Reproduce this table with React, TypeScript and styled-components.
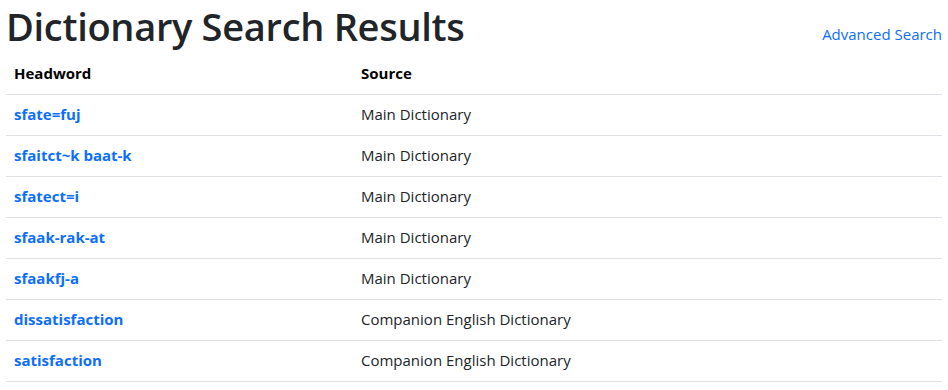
import React from "react";
import styled, { createGlobalStyle } from "styled-components";

const GlobalStyle = createGlobalStyle`
  body {
    margin: 0;
    background: #fff;
    color: #212529;
    font-family: "Open Sans", "Noto Sans", sans-serif;
    font-size: 16px;
    line-height: 1.5;
  }
`;

const Page = styled.div`
  padding: 0 6px;
`;

const Header = styled.div`
  display: flex;
  justify-content: space-between;
  align-items: flex-start;
  height: 53px;
`;

const Title = styled.h1`
  margin: 0;
  font-size: 38px;
  font-weight: 600;
  line-height: 52px;
  color: #212529;
  letter-spacing: -0.3px;
`;

const Link = styled.a<{ $bold?: boolean }>`
  color: #0d6efd;
  text-decoration: none;
  font-weight: ${(p) => (p.$bold ? 700 : 400)};
`;

const TopLink = styled(Link)`
  margin-top: 23px;
  font-size: 15px;
  line-height: 22px;
`;

const Table = styled.table`
  width: 100%;
  border-collapse: collapse;
  font-size: 15px;
`;

const Th = styled.th<{ $width?: number }>`
  box-sizing: border-box;
  text-align: left;
  font-weight: 700;
  color: #000;
  padding: 8px;
  height: 41px;
  border-bottom: 1px solid #dee2e6;
  width: ${(p) => (p.$width ? `${p.$width}px` : "auto")};
`;

const Td = styled.td`
  box-sizing: border-box;
  padding: 8px;
  height: 41px;
  border-bottom: 1px solid #dee2e6;
  color: #212529;
`;

const rows = [
  ["sfate=fuj", "Main Dictionary"],
  ["sfaitct~k baat-k", "Main Dictionary"],
  ["sfatect=i", "Main Dictionary"],
  ["sfaak-rak-at", "Main Dictionary"],
  ["sfaakfj-a", "Main Dictionary"],
  ["dissatisfaction", "Companion English Dictionary"],
  ["satisfaction", "Companion English Dictionary"],
];

export default function App() {
  return (
    <Page>
      <GlobalStyle />
      <Header>
        <Title>Dictionary Search Results</Title>
        <TopLink href="#">Advanced Search</TopLink>
      </Header>
      <Table>
        <thead>
          <tr>
            <Th $width={347}>Headword</Th>
            <Th>Source</Th>
          </tr>
        </thead>
        <tbody>
          {rows.map(([word, source]) => (
            <tr key={word}>
              <Td>
                <Link href="#" $bold>
                  {word}
                </Link>
              </Td>
              <Td>{source}</Td>
            </tr>
          ))}
        </tbody>
      </Table>
    </Page>
  );
}
